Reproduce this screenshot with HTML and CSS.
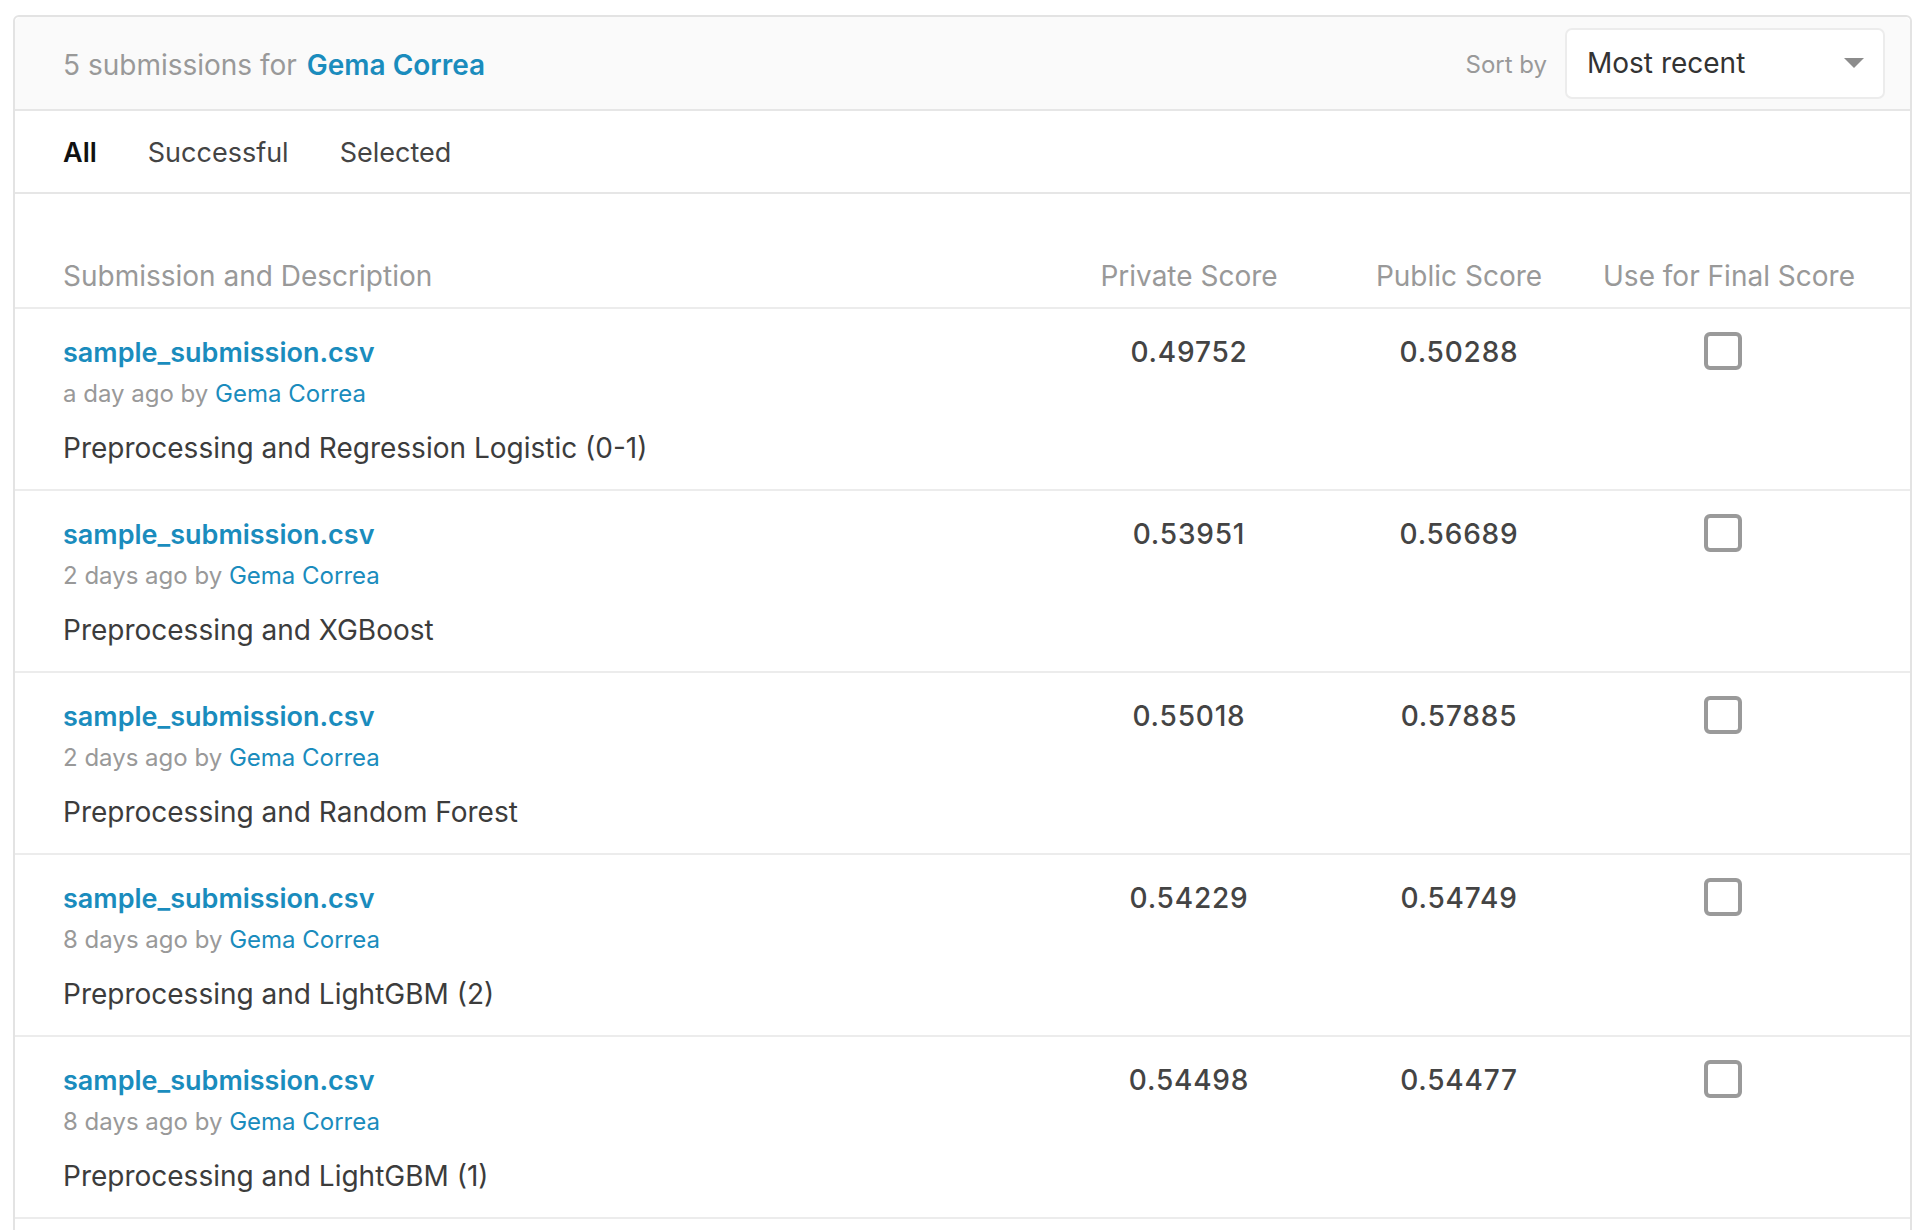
FILE: index.html
```html
<!DOCTYPE html>
<html lang="en">
<head>
<meta charset="utf-8">
<title>Submissions</title>
<link rel="stylesheet" href="styles.css">
</head>
<body>
<div class="card">
  <div class="card-header">
    <div class="title">5 submissions for <a class="link strong" href="#">Gema Correa</a></div>
    <div class="sort">
      <span class="sort-label">Sort by</span>
      <div class="select">
        <span>Most recent</span>
        <span class="caret"></span>
      </div>
    </div>
  </div>
  <div class="tabs">
    <span class="tab active">All</span>
    <span class="tab">Successful</span>
    <span class="tab">Selected</span>
  </div>
  <div class="table">
    <div class="row head">
      <div>Submission and Description</div>
      <div class="num">Private Score</div>
      <div class="num">Public Score</div>
      <div class="num">Use for Final Score</div>
    </div>
    <div class="row">
      <div class="info">
        <a class="file" href="#">sample_submission.csv</a>
        <div class="meta">a day ago by <a class="link" href="#">Gema Correa</a></div>
        <div class="desc">Preprocessing and Regression Logistic (0-1)</div>
      </div>
      <div class="num score">0.49752</div>
      <div class="num score">0.50288</div>
      <div class="num final"><span class="cb"></span></div>
    </div>
    <div class="row">
      <div class="info">
        <a class="file" href="#">sample_submission.csv</a>
        <div class="meta">2 days ago by <a class="link" href="#">Gema Correa</a></div>
        <div class="desc">Preprocessing and XGBoost</div>
      </div>
      <div class="num score">0.53951</div>
      <div class="num score">0.56689</div>
      <div class="num final"><span class="cb"></span></div>
    </div>
    <div class="row">
      <div class="info">
        <a class="file" href="#">sample_submission.csv</a>
        <div class="meta">2 days ago by <a class="link" href="#">Gema Correa</a></div>
        <div class="desc">Preprocessing and Random Forest</div>
      </div>
      <div class="num score">0.55018</div>
      <div class="num score">0.57885</div>
      <div class="num final"><span class="cb"></span></div>
    </div>
    <div class="row">
      <div class="info">
        <a class="file" href="#">sample_submission.csv</a>
        <div class="meta">8 days ago by <a class="link" href="#">Gema Correa</a></div>
        <div class="desc">Preprocessing and LightGBM (2)</div>
      </div>
      <div class="num score">0.54229</div>
      <div class="num score">0.54749</div>
      <div class="num final"><span class="cb"></span></div>
    </div>
    <div class="row">
      <div class="info">
        <a class="file" href="#">sample_submission.csv</a>
        <div class="meta">8 days ago by <a class="link" href="#">Gema Correa</a></div>
        <div class="desc">Preprocessing and LightGBM (1)</div>
      </div>
      <div class="num score">0.54498</div>
      <div class="num score">0.54477</div>
      <div class="num final"><span class="cb"></span></div>
    </div>
  </div>
</div>
</body>
</html>
```

FILE: styles.css
```css
* { box-sizing: border-box; }
html, body { margin: 0; padding: 0; background: #fff; }
body {
  font-family: Inter, "Noto Sans", "Liberation Sans", sans-serif;
  color: #3c3c3c;
  padding: 15px 0 0 13px;
}
a { text-decoration: none; }
.link { color: #1a8cbd; }
.strong { font-weight: 600; }

.card {
  width: 1899px;
  border: 2px solid #e3e3e3;
  border-radius: 6px 6px 0 0;
  padding-bottom: 60px;
}
.card-header {
  height: 94px;
  background: #fafafa;
  border-bottom: 2px solid #e6e6e6;
  border-radius: 6px 6px 0 0;
  display: flex;
  align-items: center;
  justify-content: space-between;
  padding: 0 25px 0 48px;
}
.title {
  font-size: 28px;
  color: #999;
  margin-top: 3px;
}
.title .link { margin-left: 2px; }
.sort { display: flex; align-items: center; gap: 18px; }
.sort-label { font-size: 24px; color: #999; margin-top: 2px; }
.select {
  width: 320px;
  height: 71px;
  background: #fff;
  border: 2px solid #ececec;
  border-radius: 7px;
  display: flex;
  align-items: center;
  justify-content: space-between;
  padding: 0 19px 0 20px;
  font-size: 28px;
  color: #333;
}
.caret {
  width: 0; height: 0;
  border-left: 10px solid transparent;
  border-right: 10px solid transparent;
  border-top: 10px solid #8c8c8c;
}
.tabs {
  height: 83px;
  border-bottom: 2px solid #e6e6e6;
  display: flex;
  align-items: center;
  gap: 51px;
  padding: 2px 0 0 48px;
  font-size: 27px;
  color: #444;
}
.tab.active { color: #111; font-weight: 600; }

.row {
  display: grid;
  grid-template-columns: 1fr 270px 270px 270px;
  padding: 26px 46px 0 48px;
  height: 182px;
  border-bottom: 2px solid #ececec;
}
.row.head {
  height: 115px;
  padding-top: 64px;
  font-size: 28px;
  line-height: 36px;
  color: #999;
}
.num { text-align: center; }
.info { display: flex; flex-direction: column; align-items: flex-start; }
.file {
  font-size: 27px;
  line-height: 36px;
  font-weight: 600;
  color: #1a8cbd;
}
.meta {
  font-size: 24px;
  line-height: 32px;
  margin-top: 7px;
  color: #999;
}
.desc {
  font-size: 28px;
  line-height: 36px;
  margin-top: 20px;
  color: #3c3c3c;
}
.score {
  font-size: 28px;
  line-height: 36px;
  font-weight: 500;
  color: #444;
  letter-spacing: 0.8px;
  margin-top: -1px;
}
.final { display: flex; justify-content: center; padding-right: 12px; }
.cb {
  display: block;
  width: 38px;
  height: 38px;
  border: 4px solid #9a9a9a;
  border-radius: 6px;
  margin-top: -3px;
}
```
